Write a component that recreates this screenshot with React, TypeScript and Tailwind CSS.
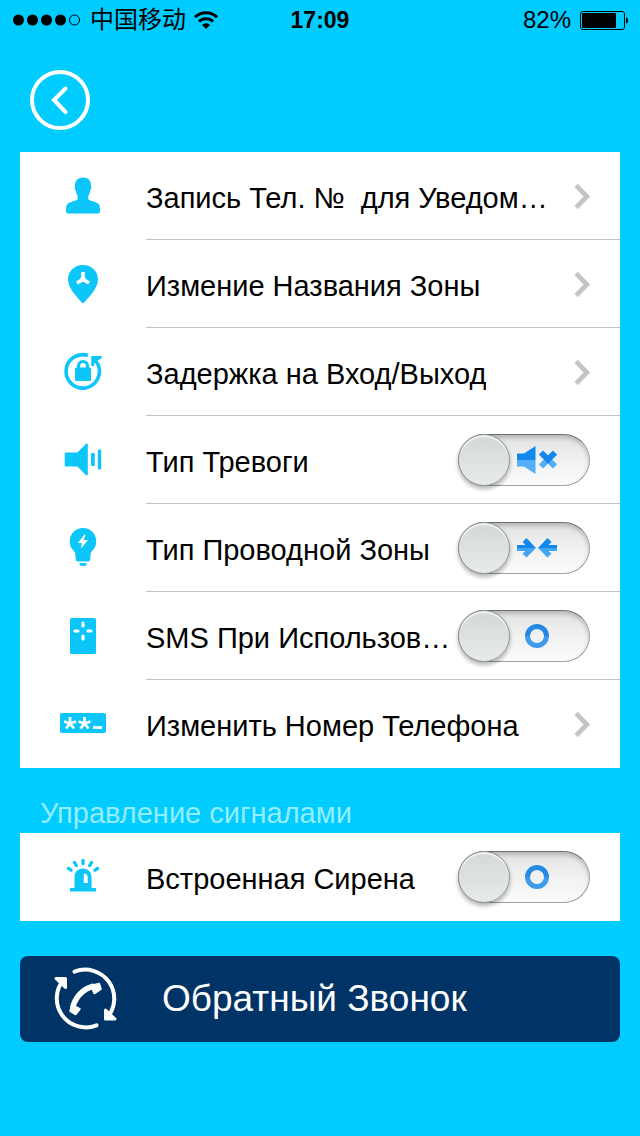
import { useState, type ReactNode } from "react";
import { clsx } from "clsx";

function UserIcon() {
  return (
    <svg className="w-9 h-10" viewBox="0 0 36 40" fill="currentColor" aria-hidden="true">
      <path d="M18.500 1.500c5 0 7.700 3.500 7.500 8.500.8 1 .5 3.500-.8 4.500-.4 3-1.500 4.500-1.900 5.700v3c1 1.600 9.700 2.600 11 5.800.7 1.500.7 4.500.7 6s-.7 2.500-2.200 2.500H3.200C1.700 37.500 1 36.500 1 35s0-4.500.7-6c1.300-3.200 10-4.200 11-5.800v-3c-.4-1.200-1.500-2.700-1.900-5.700-1.300-1-1.600-3.500-.8-4.500C9.800 5 12.500 1.500 18.500 1.500z" />
    </svg>
  );
}

function PinIcon() {
  return (
    <svg className="w-9 h-10" viewBox="0 0 36 40" aria-hidden="true">
      <path fill="currentColor" d="M18 1c8.500 0 15 6.300 15 14.500C33 24 24 33 19.200 38.600c-.8.800-1.600.8-2.400 0C12 33 3 24 3 15.500 3 7.300 9.500 1 18 1z" />
      <path d="M18 8v7.500M18 15.500l-6 3.500M18 15.500l6 3.500" stroke="#fff" strokeWidth="3.600" fill="none" />
      <path d="M16.200 13h3.600l3 5h-9.600z" fill="#fff" />
    </svg>
  );
}

function DelayIcon() {
  return (
    <svg className="w-10 h-10" viewBox="0 0 40 40" fill="none" aria-hidden="true">
      <path d="M25 3.500A16.700 16.700 0 1 0 34.500 11.500" stroke="currentColor" strokeWidth="3.600" />
      <path d="M28.300 4H39l-1 2.800-3.500 1.600 2 3-3 1.600-2-2.500L31 14h-2.700z" fill="currentColor" />
      <path d="M15.500 18v-4a4.500 4.500 0 0 1 9 0v4" stroke="currentColor" strokeWidth="3.200" />
      <rect x="12" y="15.500" width="16" height="13.500" rx="1.500" fill="currentColor" />
    </svg>
  );
}

function SpeakerIcon() {
  return (
    <svg className="w-10 h-9" viewBox="0 0 40 36" fill="currentColor" aria-hidden="true">
      <path d="M3 10.500h11.500l8.300-8.500c.8-.8 2-.5 2 .7v29.600c0 1.200-1.200 1.500-2 .7L14.500 24.500H3c-.8 0-1.300-.5-1.300-1.300V11.800c0-.8.5-1.300 1.300-1.300z" />
      <rect x="28" y="11" width="3.800" height="13" rx="1" />
      <rect x="34.800" y="7.500" width="3.400" height="20" rx="1" />
    </svg>
  );
}

function BulbIcon() {
  return (
    <svg className="w-8 h-10" viewBox="0 0 32 40" fill="currentColor" aria-hidden="true">
      <path d="M16 0c7.500 0 13.200 5.700 13.200 13 0 5.500-2.200 8.200-4.500 10.500-1 1-1.100 2.200-1.400 7.500-.1 1.700-.8 2.500-2.300 2.500H11c-1.500 0-2.200-.8-2.300-2.500-.3-5.300-.4-6.500-1.400-7.500C5 21.200 2.800 18.500 2.800 13 2.800 5.700 8.500 0 16 0z" />
      <path d="M12.500 35h7v1c0 1.200-.8 2-2 2h-3c-1.200 0-2-.8-2-2z" />
      <path d="M17.500 6.500L10.800 15h4L14 20.500l7-8.500h-4.500l2-5z" fill="#fff" />
    </svg>
  );
}

function PanelIcon() {
  return (
    <svg className="w-7 h-9" viewBox="0 0 28 36" fill="none" aria-hidden="true">
      <rect x="1" y="0" width="26" height="36" rx="1.500" fill="currentColor" />
      <path d="M14 5v3M14 18v3M6 13h3M19 13h3" stroke="#fff" strokeWidth="3.200" strokeLinecap="round" />
    </svg>
  );
}

function PinCodeIcon() {
  return (
    <svg className="w-12 h-6" viewBox="0 0 48 24" fill="none" aria-hidden="true">
      <rect x="1" y="1" width="46" height="20" rx="2" fill="currentColor" />
      <g stroke="#fff" strokeWidth="2.800">
        <path d="M11 11.500V5M11 11.500l-6-2M11 11.500l6-2M11 11.500l-4 5M11 11.500l4 5" />
        <path d="M25.500 11.500V5M25.500 11.500l-6-2M25.500 11.500l6-2M25.500 11.500l-4 5M25.500 11.500l4 5" />
        <path d="M34 15.500h9" />
      </g>
    </svg>
  );
}

function SirenIcon() {
  return (
    <svg className="w-9 h-9" viewBox="0 0 36 36" fill="none" aria-hidden="true">
      <path d="M18 1.500v3M9.500 3.500l1.800 3M26.500 3.500l-1.800 3M3.500 9.500l2.500 1.600M32.500 9.500L30 11.100" stroke="currentColor" strokeWidth="3.400" strokeLinecap="round" />
      <path d="M9.500 29V18.500c0-5.500 3.200-9 8.500-9s8.500 3.500 8.500 9V29H30c.6 0 1 .4 1 1v2.500H5V30c0-.6.400-1 1-1z" fill="currentColor" />
      <path d="M18.800 14.500c2.500.2 3.900 1.500 3.900 3.800V24h-3.900z" fill="#fff" />
    </svg>
  );
}

function ChevronIcon() {
  return (
    <svg className="w-4 h-7 shrink-0 text-[#c4c4c4]" viewBox="0 0 16 28" fill="none" aria-hidden="true">
      <path d="M2 3.500l11 11-11 11" stroke="currentColor" strokeWidth="4.600" />
    </svg>
  );
}

function MuteMark() {
  return (
    <svg className="w-10 h-7" viewBox="0 0 40 28" fill="none" aria-hidden="true">
      <path d="M0 7.500h7L18.500 0v14H0z" fill="#1288ee" />
      <path d="M0 14h18.500v14L7 20.500H0z" fill="#55aef7" />
      <path d="M24 20.500l7-7 7 7" stroke="#55aef7" strokeWidth="6" />
      <path d="M24 6.500l7 7 7-7" stroke="#1288ee" strokeWidth="6" />
    </svg>
  );
}

function ArrowsMark() {
  return (
    <svg className="w-10 h-7" viewBox="0 0 40 28" aria-hidden="true">
      <path d="M0 11h8.500L5.500 8l4-4 9.500 10H0zM40 11h-8.500l3-3-4-4L21 14h19z" fill="#1288ee" />
      <path d="M0 14h19l-9.500 9.500-4-4L8.500 17H0zM40 14H21l9.500 9.500 4-4-3-2.500H40z" fill="#45a5f5" />
    </svg>
  );
}

function RingMark() {
  return (
    <svg className="w-10 h-7" viewBox="0 0 40 28" fill="none" aria-hidden="true">
      <path d="M10.500 14a9.500 9.500 0 0 1 19 0" stroke="#2389e2" strokeWidth="5" />
      <path d="M29.500 14a9.500 9.500 0 0 1-19 0" stroke="#3d9bea" strokeWidth="5" />
    </svg>
  );
}

function CallbackIcon() {
  return (
    <svg className="w-[66px] h-[66px] shrink-0" viewBox="0 0 66 66" fill="none" stroke="currentColor" strokeWidth="4" strokeLinecap="round" strokeLinejoin="round" aria-hidden="true">
      <path d="M22.500 5.700A29 29 0 0 1 55 51.800" />
      <path d="M44.500 59.300A29 29 0 0 1 12 13.200" />
      <path d="M4 12.500h9.500v9zM63 53h-9.500v-9z" fill="currentColor" strokeWidth="3" />
      <path d="M20.500 42C23.500 31 31 23 42 20" strokeWidth="5.500" strokeLinecap="butt" />
      <path d="M20.500 39.500l7 3.500-4 5-5-3zM39.500 20l7.500-2 1.500 5-6 4z" fill="currentColor" strokeWidth="2.500" />
    </svg>
  );
}

function Row({ icon, children, last }: { icon: ReactNode; children: ReactNode; last?: boolean }) {
  return (
    <li className="flex h-[88px] bg-white">
      <div className="w-[126px] shrink-0 flex items-center justify-center text-[#0cc6fa]">{icon}</div>
      <div className={clsx("flex-1 min-w-0 flex border-b", last ? "border-transparent" : "border-[#c3c3c7]")}>
        {children}
      </div>
    </li>
  );
}

function LinkRow({ icon, label, last }: { icon: ReactNode; label: string; last?: boolean }) {
  return (
    <Row icon={icon} last={last}>
      <button type="button" className="flex-1 min-w-0 flex items-center justify-between pr-[30px] text-left">
        <span className="whitespace-pre overflow-hidden pt-1">{label}</span>
        <ChevronIcon />
      </button>
    </Row>
  );
}

function SwitchRow({ icon, label, mark, last }: { icon: ReactNode; label: string; mark: ReactNode; last?: boolean }) {
  const [on, setOn] = useState(false);

  return (
    <Row icon={icon} last={last}>
      <label className="flex-1 min-w-0 flex items-center justify-between pr-[30px] cursor-pointer">
        <span className="whitespace-pre overflow-hidden pt-1">{label}</span>
        <input type="checkbox" role="switch" className="sr-only" checked={on} onChange={(e) => setOn(e.target.checked)} />
        <span
          className={clsx(
            "w-[132px] h-[52px] shrink-0 flex items-center rounded-full border border-[#a0a0a0] border-t-[#707070] bg-linear-to-b from-[#e2e2e2] via-[#f1f1f1] to-[#fbfbfb] shadow-[inset_0_3px_4px_rgba(0,0,0,0.2)]",
            on && "flex-row-reverse"
          )}
        >
          <span className="w-[52px] h-[52px] -mx-px shrink-0 rounded-full border border-[#8f9293] bg-linear-to-b from-[#d3d8d9] to-[#e6eaea] shadow-[0_3px_4px_rgba(0,0,0,0.3),inset_0_2px_1px_rgba(255,255,255,0.7)]" />
          <span className="px-2">{mark}</span>
        </span>
      </label>
    </Row>
  );
}

function StatusBar() {
  return (
    <div className="grid grid-cols-[1fr_auto_1fr] items-center h-10 px-3 text-black text-2xl">
      <div className="flex items-center">
        <svg className="w-[70px] h-3" viewBox="0 0 70 12" aria-hidden="true">
          <circle cx="6.500" cy="6" r="5.500" />
          <circle cx="20.500" cy="6" r="5.500" />
          <circle cx="34.500" cy="6" r="5.500" />
          <circle cx="48.500" cy="6" r="5.500" />
          <circle cx="62.500" cy="6" r="5" fill="none" stroke="black" />
        </svg>
        <span className="ml-2">中国移动</span>
        <svg className="ml-2 w-6 h-[18px]" viewBox="0 0 24 18" fill="none" stroke="black" aria-hidden="true">
          <path d="M1 6.200a16 16 0 0 1 22 0" strokeWidth="3" />
          <path d="M5 10.500a10.300 10.300 0 0 1 14 0" strokeWidth="3" />
          <path d="M12 18l-4-4a5.500 5.500 0 0 1 8 0z" fill="black" stroke="none" />
        </svg>
      </div>
      <time className="font-bold text-[23px]">17:09</time>
      <div className="flex items-center justify-end gap-2">
        <span>82%</span>
        <svg className="w-[49px] h-5" viewBox="0 0 49 20" aria-hidden="true">
          <rect x="1.500" y="1.500" width="44" height="18" rx="2.500" fill="none" stroke="black" />
          <rect x="3" y="3" width="34" height="15" rx="1" />
          <path d="M47 7.500c1.500.3 2 1.300 2 3s-.5 2.700-2 3z" />
        </svg>
      </div>
    </div>
  );
}

export default function App() {
  return (
    <div className="min-h-screen bg-[#00ccff] font-['Liberation_Sans','Noto_Sans_CJK_SC',sans-serif]">
      <StatusBar />

      <header className="px-[30px] pt-[30px] pb-[22px]">
        <button type="button" aria-label="Назад" className="block rounded-full text-white">
          <svg className="w-[60px] h-[60px]" viewBox="0 0 60 60" fill="none" stroke="currentColor" strokeWidth="4" aria-hidden="true">
            <circle cx="30" cy="30" r="28" />
            <path d="M35.500 18.500L24 30l11.500 12" strokeLinecap="round" />
          </svg>
        </button>
      </header>

      <main className="px-5 text-[29px] leading-9 text-black">
        <ul>
          <LinkRow icon={<UserIcon />} label="Запись Тел. №  для Уведом…" />
          <LinkRow icon={<PinIcon />} label="Измение Названия Зоны" />
          <LinkRow icon={<DelayIcon />} label="Задержка на Вход/Выход" />
          <SwitchRow icon={<SpeakerIcon />} label="Тип Тревоги" mark={<MuteMark />} />
          <SwitchRow icon={<BulbIcon />} label="Тип Проводной Зоны" mark={<ArrowsMark />} />
          <SwitchRow icon={<PanelIcon />} label="SMS При Использов…" mark={<RingMark />} />
          <LinkRow icon={<PinCodeIcon />} label="Изменить Номер Телефона" last />
        </ul>

        <h2 className="px-5 pt-[27px] pb-0.5 text-[#94ecff]">Управление сигналами</h2>
        <ul>
          <SwitchRow icon={<SirenIcon />} label="Встроенная Сирена" mark={<RingMark />} last />
        </ul>

        <button type="button" className="mt-[35px] w-full h-[86px] flex items-center rounded-lg bg-[#003366] px-8 text-white text-[37px]">
          <CallbackIcon />
          <span className="ml-11">Обратный Звонок</span>
        </button>
      </main>
    </div>
  );
}
